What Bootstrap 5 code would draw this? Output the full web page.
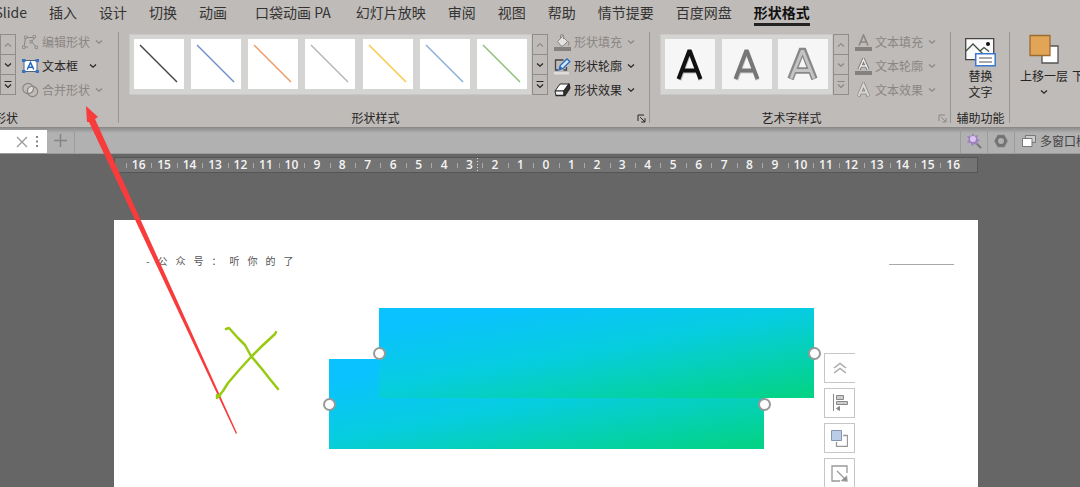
<!DOCTYPE html>
<html lang="zh-CN">
<head>
<meta charset="utf-8">
<meta name="viewport" content="width=device-width, initial-scale=1">
<title>形状格式</title>
<link href="https://cdn.jsdelivr.net/npm/bootstrap@5.3.0/dist/css/bootstrap.min.css" rel="stylesheet">
<style>
body{font-family:"Noto Sans CJK SC",sans-serif;font-size:12px;line-height:16px;color:#262524;background:#666}
button{font:inherit;color:inherit;background:none;border:0;padding:0}
svg{display:block;flex:none}
.app{min-height:100vh;overflow:hidden}
.ribbon{background:#bfbbb8;border-bottom:1px solid #8b8988}
.tabs{height:32px;gap:22px;font-size:14px;line-height:24px}
.tabs a{color:#333;text-decoration:none;white-space:nowrap}
.tabs .first{width:27px}
.tabs .wide{margin:0 3px 0 6px}
.tabs .current{color:#111;font-weight:700;border-bottom:3px solid #222;height:26px}
.grp{height:95px;flex:none;background:linear-gradient(#989492,#989492) right top/1px 91px no-repeat}
.grp-body{height:77px;padding-top:2px}
.grp-name{height:18px;line-height:18px;text-align:center;white-space:nowrap}
.g-shape{width:119px}.g-style{width:531px;padding-left:10px}.g-art{width:301px;padding-left:10px}
.g-shape .grp-name{width:18px;display:flex;justify-content:flex-end}
.g-style .grp-name,.g-art .grp-name{padding-right:28px}
.g-alt{width:59px}.g-order{background:none;padding-left:10px}
.gallery{height:61px;padding:4px;background:#d4d4d3;border:1px solid #c9c8c7}
.gallery button{width:50px;height:50px;background:#fff}
.gallery .word{background:#f6f6f6}
.g-style .gallery{width:403px}.g-art .gallery{width:173px}
.steps{width:16px;height:61px;border:1px solid #8f8c8a}
.steps button{flex:1;display:grid;place-items:center}
.steps button+button{border-top:1px solid #8f8c8a}
.cmds{padding-left:6px;margin-top:-4px}
.cmds button{height:24px;display:flex;align-items:center;gap:3px;white-space:nowrap}
.off{color:#8a8684!important}
.chev{margin-left:2px}
.launch{position:absolute;right:4px;bottom:4px}
.next{padding-top:34px}
.docbar{height:26px;background:linear-gradient(#8e8e8e,#b1b1b1 5px);border-bottom:1px solid #9b9b9b;color:#444}
.doctab{width:47px;height:23px;background:#fff;color:#888}
.cell{width:27px;height:25px;display:grid;place-items:center;border-left:1px solid #9c9c9c}
.cell.last{width:66px;display:flex;align-items:center;gap:4px;padding-left:7px;overflow:hidden;white-space:nowrap}
.sheet{width:80%;margin-left:10.55%}
.ruler{height:16px;margin-top:3px;padding:0 11px;background:#747474;border:1px solid #555;color:#f3f3f3;font:600 12px/14px "Open Sans",sans-serif}
.ruler span{flex:1 1 0;min-width:0;text-align:center;background:linear-gradient(#aaa,#aaa) left center/1px 5px no-repeat}
.ruler .mark-here{background:repeating-linear-gradient(#ddd 0 1px,transparent 1px 3px) 20px center/1px 14px no-repeat,linear-gradient(#aaa,#aaa) left center/1px 5px no-repeat}
.slide{margin-top:47px;background:#fff;min-height:267px;flex:1}
.slide-head{padding:33px 24px 0 32px}
.byline{font-size:10px;gap:8px;color:#555}
.rule{width:65px;height:1px;background:#aaa;margin-top:11px}
.block{position:absolute;width:50.35%;height:90px}
.fade-fill{background:linear-gradient(170deg,#0ac2ff 12%,#07cde0 48%,#03d388 96%)}
.block.back{left:24.88%;top:139px}.block.front{left:30.67%;top:88px}
.knob{position:absolute;width:13px;height:13px;border:2px solid #999;border-radius:50%;background:#fff;top:39px}
.knob.l{left:-6px}.knob.r{right:-7px}
.floatbar{position:absolute;left:82.2%;top:133px;display:flex;flex-direction:column;gap:5px}
.floatbar button{width:31px;height:30px;border:1px solid #c6c6c6;background:#fff;display:grid;place-items:center}
.floatbar .top{border-right:0}
.ink{position:absolute;left:0;top:0;pointer-events:none}
</style>
</head>
<body>
<svg width="0" height="0" class="position-absolute" aria-hidden="true">
<defs>
<symbol id="down" viewBox="0 0 8 8"><path d="M1 2.5 4 5.3 7 2.5" fill="none" stroke="currentColor" stroke-width="1.2"/></symbol>
<symbol id="up" viewBox="0 0 8 8"><path d="M1 5.5 4 2.7 7 5.5" fill="none" stroke="currentColor" stroke-width="1.1"/></symbol>
<symbol id="more" viewBox="0 0 8 10"><path d="M.5 1.5h7M1 4.5 4 7.5 7 4.5" fill="none" stroke="currentColor" stroke-width="1.2"/></symbol>
<symbol id="launch" viewBox="0 0 9 9"><path d="M1 7V1h6M3.2 3.2 8 8M8 4.2V8H4.2" fill="none" stroke="currentColor"/></symbol>
</defs>
</svg>
<div class="app d-flex flex-column position-relative">
<header class="ribbon">
<nav class="tabs d-flex align-items-start">
<a href="#" class="first d-flex justify-content-end">iSlide</a>
<a href="#">插入</a><a href="#">设计</a><a href="#">切换</a><a href="#">动画</a>
<a href="#" class="wide">口袋动画 PA</a><a href="#">幻灯片放映</a><a href="#">审阅</a><a href="#">视图</a><a href="#">帮助</a><a href="#">情节提要</a><a href="#">百度网盘</a><a href="#" class="current" aria-current="page">形状格式</a>
</nav>
<div class="d-flex overflow-hidden">
<section class="grp g-shape">
<div class="grp-body d-flex">
<div class="steps d-flex flex-column">
<button class="off" aria-label="上"><svg width="8" height="8"><use href="#up"/></svg></button>
<button aria-label="下"><svg width="8" height="8"><use href="#down"/></svg></button>
<button aria-label="更多"><svg width="8" height="10"><use href="#more"/></svg></button>
</div>
<div class="cmds">
<button class="off"><svg width="17" height="16" viewBox="0 0 17 16" fill="none" stroke="currentColor"><path d="M4 3.500h8M3.500 4 2 13h4M12.500 4l-3 3.500 4.500 5.500"/><path d="M2.500 2h2.500v2.500H2.500zM11 1.500h2.500V4H11zM.5 12H3v2.500H.5zM8 6.500h2V9H8zM13 12h2.500v2.500H13z" fill="#bfbbb8" stroke-width=".8"/></svg><span>编辑形状</span><svg class="chev" width="8" height="8"><use href="#down"/></svg></button>
<button><svg width="17" height="16" viewBox="0 0 17 16"><path d="M2 2.500h13v11H2z" fill="#fff" stroke="#4a6488"/><path d="M0 1h3.500v3H0zM13.500 1H17v3h-3.500zM0 12h3.500v3H0zM13.500 12H17v3h-3.500z" fill="#3672bd"/><path d="M5.200 11.500 8.500 4.500l3.300 7M6.500 9.200h4" fill="none" stroke="#2368bd" stroke-width="1.500"/></svg><span>文本框</span><svg class="ms-2" width="8" height="8"><use href="#down"/></svg></button>
<button class="off"><svg width="17" height="16" viewBox="0 0 17 16" fill="none" stroke="currentColor" stroke-width="1.200"><circle cx="6" cy="6.500" r="5.200"/><circle cx="10.500" cy="9.500" r="5.200"/><path d="M5.500 8.500a5.200 5.200 0 0 1 5.600-4.200 5.200 5.200 0 0 1-5.200 7.200z" fill="#ddd"/></svg><span>合并形状</span><svg class="chev" width="8" height="8"><use href="#down"/></svg></button>
</div>
</div>
<div class="grp-name">形状</div>
</section>
<section class="grp g-style position-relative">
<div class="grp-body d-flex">
<div class="gallery d-flex justify-content-between">
<button aria-label="黑色线"><svg width="50" height="50"><path d="m6 6 37 37" stroke="#444" stroke-width="1.500"/></svg></button>
<button aria-label="蓝色线"><svg width="50" height="50"><path d="m6 6 37 37" stroke="#6f8fcb" stroke-width="1.500"/></svg></button>
<button aria-label="橙色线"><svg width="50" height="50"><path d="m6 6 37 37" stroke="#ee9a63" stroke-width="1.500"/></svg></button>
<button aria-label="灰色线"><svg width="50" height="50"><path d="m6 6 37 37" stroke="#b5b5b5" stroke-width="1.500"/></svg></button>
<button aria-label="黄色线"><svg width="50" height="50"><path d="m6 6 37 37" stroke="#fbc740" stroke-width="1.500"/></svg></button>
<button aria-label="浅蓝线"><svg width="50" height="50"><path d="m6 6 37 37" stroke="#86add9" stroke-width="1.500"/></svg></button>
<button aria-label="绿色线"><svg width="50" height="50"><path d="m6 6 37 37" stroke="#8dbd74" stroke-width="1.500"/></svg></button>
</div>
<div class="steps d-flex flex-column">
<button class="off" aria-label="上"><svg width="8" height="8"><use href="#up"/></svg></button>
<button aria-label="下"><svg width="8" height="8"><use href="#down"/></svg></button>
<button aria-label="更多"><svg width="8" height="10"><use href="#more"/></svg></button>
</div>
<div class="cmds">
<button class="off"><svg width="17" height="17" viewBox="0 0 17 17"><path d="M0 13h17v4H0z" fill="#85817f"/><path d="M3.500 7.500 8.500 2.500l5 5-4.500 4.500H7z" fill="#e3e1df" stroke="currentColor"/><path d="M6.500 5V2a1.500 1.500 0 0 1 3 0v3M14 7q2 3 .5 4.500" fill="none" stroke="currentColor"/></svg><span>形状填充</span><svg class="chev" width="8" height="8"><use href="#down"/></svg></button>
<button><svg width="17" height="17" viewBox="0 0 17 17"><path d="M0 14h15v2.500H0z" fill="#ddd"/><path d="M9.500 2h-8v10h2.500M12.500 9v3h-3" fill="none" stroke="#444" stroke-width="1.300"/><path d="m5 12 1.200-4.500L13 1l2.800 2.500L9 10.500z" fill="#d4e6f7" stroke="#2b6cb8" stroke-width="1.300"/><path d="m5 12 1.200-4L9 10.500z" fill="#2b6cb8"/></svg><span>形状轮廓</span><svg class="chev" width="8" height="8"><use href="#down"/></svg></button>
<button><svg width="17" height="16" viewBox="0 0 17 16" stroke="#292929" stroke-linejoin="round"><path d="m1 9 5-7h9l-5 7z" fill="#fff"/><path d="M1 9h9v4.500H2z" fill="#f2f2f2"/><path d="m10 9 5-7 .8 4-5 7.500H10zM1.500 13.500h9" fill="#333" stroke-width="1.400"/></svg><span>形状效果</span><svg class="chev" width="8" height="8"><use href="#down"/></svg></button>
</div>
</div>
<div class="grp-name">形状样式</div>
<button class="launch" aria-label="形状样式选项"><svg width="9" height="9"><use href="#launch"/></svg></button>
</section>
<section class="grp g-art position-relative">
<div class="grp-body d-flex">
<div class="gallery d-flex justify-content-between">
<button class="word" aria-label="黑色艺术字"><svg width="50" height="50" fill="none"><path d="m14.500 41 10-28h1l10 28M18 32.500h14" stroke="#bbb" stroke-width="4"/><path d="m13.500 40 10.500-27.500h1L35.500 40M17.500 31.500h14" stroke="#111" stroke-width="4"/></svg></button>
<button class="word" aria-label="灰色艺术字"><svg width="50" height="50" fill="none"><path d="m14.500 41 10-28h1l10 28M18 32.500h14" stroke="#ccc" stroke-width="4"/><path d="m13.500 40 10.500-27.500h1L35.500 40M17.500 31.500h14" stroke="#777" stroke-width="4"/></svg></button>
<button class="word" aria-label="轮廓艺术字"><svg width="50" height="50" fill="none"><path d="m12.500 40 11-28h2l11 28M17.500 31.500h14" stroke="#888" stroke-width="6.500"/><path d="m13 39.500 11-27h1l11 27M17 31.500h16" stroke="#c4c4c4" stroke-width="3"/></svg></button>
</div>
<div class="steps off d-flex flex-column">
<button aria-label="上"><svg width="8" height="8"><use href="#up"/></svg></button>
<button aria-label="下"><svg width="8" height="8"><use href="#down"/></svg></button>
<button aria-label="更多"><svg width="8" height="10"><use href="#more"/></svg></button>
</div>
<div class="cmds off">
<button><svg width="17" height="17" viewBox="0 0 17 17"><path d="M0 13h17v4H0z" fill="#85817f"/><path d="M4 11.500 8.500 1 13 11.500M5.500 8h6" fill="none" stroke="currentColor" stroke-width="1.600"/></svg><span>文本填充</span><svg class="chev" width="8" height="8"><use href="#down"/></svg></button>
<button><svg width="17" height="17" viewBox="0 0 17 17"><path d="M0 13h17v4H0z" fill="#85817f"/><path d="M4 11.500 8.500 1.500 13 11.500M5.500 8h6" fill="none" stroke="#777" stroke-width="3.200"/><path d="M4 11.500 8.500 1.500 13 11.500M5.500 8h6" fill="none" stroke="#eee" stroke-width="1.400"/></svg><span>文本轮廓</span><svg class="chev" width="8" height="8"><use href="#down"/></svg></button>
<button><svg width="17" height="17" viewBox="0 0 17 17" fill="none"><path d="m3.500 14.500 5-12 5 12M5 10.500h7" stroke="currentColor" stroke-width="3.500"/><path d="m3.500 14 5-11.500 5 11.500M5 10.500h7" stroke="#d9d7d5" stroke-width="2"/></svg><span>文本效果</span><svg class="chev" width="8" height="8"><use href="#down"/></svg></button>
</div>
</div>
<div class="grp-name">艺术字样式</div>
<button class="launch off" aria-label="艺术字样式选项"><svg width="9" height="9"><use href="#launch"/></svg></button>
</section>
<section class="grp g-alt">
<div class="grp-body d-flex justify-content-center">
<button class="d-flex flex-column align-items-center"><svg class="mt-1" width="31" height="30" viewBox="0 0 31 30"><path d="M.7.700h28v21H.7z" fill="#fafafa" stroke="#444" stroke-width="1.300"/><path d="m1 13 7-7 11 11M15 13l4-3.500 5 4" fill="none" stroke="#40503f" stroke-width="1.300"/><circle cx="23" cy="6" r="2" fill="#111"/><path d="M10.700 15.700h19.500v12H10.700z" fill="#fff" stroke="#3b78cc" stroke-width="1.500"/><path d="M14 20h13M14 24h13" stroke="#555" stroke-width="1.200"/></svg><span>替换<br>文字</span></button>
</div>
<div class="grp-name">辅助功能</div>
</section>
<section class="grp g-order">
<div class="grp-body d-flex align-items-start">
<button class="d-flex flex-column align-items-center"><svg width="30" height="30" viewBox="0 0 30 30"><path d="M13 12h16v17H13z" fill="#fff" stroke="#555" stroke-width="1.300"/><path d="M1 1.500h20v20H1z" fill="#e2a558" stroke="#9c6b31" stroke-width="1.300"/></svg><span class="mt-1">上移一层</span><svg class="mt-1" width="8" height="8"><use href="#down"/></svg></button>
<button class="next ms-1 text-nowrap">下移一层</button>
</div>
</section>
</div>
</header>
<div class="docbar d-flex align-items-end">
<div class="doctab d-flex align-items-center justify-content-end gap-2 pe-1">
<button aria-label="关闭"><svg width="12" height="12"><path d="m1 1 10 10M11 1 1 11" stroke="#999" stroke-width="1.300"/></svg></button>
<button class="me-1" aria-label="菜单"><svg width="3" height="12" fill="#888"><path d="M0 0h2v2H0zM0 4.500h2v2H0zM0 9h2v2H0z"/></svg></button>
</div>
<button class="cell border-0" aria-label="新建"><svg width="13" height="13"><path d="M6.500 0v13M0 6.500h13" stroke="#858585" stroke-width="1.500"/></svg></button>
<div class="cell w-auto flex-grow-1"></div>
<button class="cell" aria-label="魔棒"><svg width="16" height="16" viewBox="0 0 16 16"><path d="m9 9 6 6" stroke="#777" stroke-width="2"/><path d="m7 0 1.500 3L12 2l-1 3.500 3 2-3 1.500.5 3-3.500-1-2 2.500-1-3.500L1 9.500 3 6.500 1 3l4 .5z" fill="#9d80bd"/><circle cx="7" cy="6" r="3" fill="#dcc4f2"/></svg></button>
<button class="cell" aria-label="设置"><svg width="14" height="14" viewBox="0 0 14 14"><path d="M4 1.500h6L13 7l-3 5.500H4L1 7z" fill="#717171" stroke="#7a7a7a" stroke-width="1.500" stroke-linejoin="round"/><circle cx="7" cy="7" r="3" fill="#b1b1b1"/></svg></button>
<button class="cell last"><svg width="14" height="12" viewBox="0 0 14 12"><path d="M3.500 3V.5h10v7H10" fill="#ccc" stroke="#777"/><path d="M.5 3.500h9.500v8H.5z" fill="#fff" stroke="#777"/></svg><span>多窗口模式</span></button>
</div>
<div class="sheet ruler d-flex">
<span>16</span><span>15</span><span>14</span><span>13</span><span>12</span><span>11</span><span>10</span><span>9</span><span>8</span><span>7</span><span>6</span><span>5</span><span>4</span><span class="mark-here">3</span><span>2</span><span>1</span><span>0</span><span>1</span><span>2</span><span>3</span><span>4</span><span>5</span><span>6</span><span>7</span><span>8</span><span>9</span><span>10</span><span>11</span><span>12</span><span>13</span><span>14</span><span>15</span><span>16</span>
</div>
<main class="sheet slide position-relative">
<div class="slide-head d-flex justify-content-between align-items-start">
<div class="byline d-flex"><span>-</span><span>公</span><span>众</span><span>号</span><span>：</span><span>听</span><span>你</span><span>的</span><span>了</span></div>
<div class="rule"></div>
</div>
<div class="block back fade-fill"></div>
<div class="block front fade-fill"><span class="knob l"></span><span class="knob r"></span></div>
<div class="block back"><span class="knob l"></span><span class="knob r"></span></div>
<div class="floatbar">
<button class="top" aria-label="收起"><svg width="14" height="12" fill="none" stroke="#aaa" stroke-width="1.500"><path d="m1 6 6-4.500L13 6M1 11l6-4.500 6 4.500"/></svg></button>
<button aria-label="对齐"><svg width="16" height="18" fill="#ccc" stroke="#888"><path d="M1.500 0v17"/><path d="M4.500 1.500h7v4h-7zM4.500 7.500h11v3h-11z"/><path d="m4.500 14.500 3-2v4z" fill="#888"/></svg></button>
<button aria-label="层次"><svg width="17" height="17" fill="none" stroke="#999"><path d="M12 5.500h4.500v11h-11V12" stroke-width="1.300"/><path d="M.5.500h10v10H.5z" fill="#b9cde8" stroke="#8495ad"/></svg></button>
<button aria-label="缩放"><svg width="17" height="17" fill="none" stroke="#999" stroke-width="1.300"><path d="M16 8V1H1v15h8M6 6l9 9"/><path d="m16 16-5-.5 4.500-4z" fill="#888"/></svg></button>
</div>
</main>
<svg class="ink" width="290" height="440" viewBox="0 0 290 440" aria-hidden="true">
<path d="M86 106 98 117l-3 2L237 433l-1 1L89 122l-2 0z" fill="#f73c3b"/>
<path d="m226 329 3-1 9 10 7 7 6 11 11 13 7 9 9 11M276 332l-1 2-13 12-11 11-11 12-12 14-5 8-5 6M217 398l0-3 3 1" fill="none" stroke="#98ca12" stroke-width="2.500" stroke-linecap="round" stroke-linejoin="round"/>
</svg>
</div>
<script src="https://cdn.jsdelivr.net/npm/bootstrap@5.3.0/dist/js/bootstrap.bundle.min.js"></script>
</body>
</html>
